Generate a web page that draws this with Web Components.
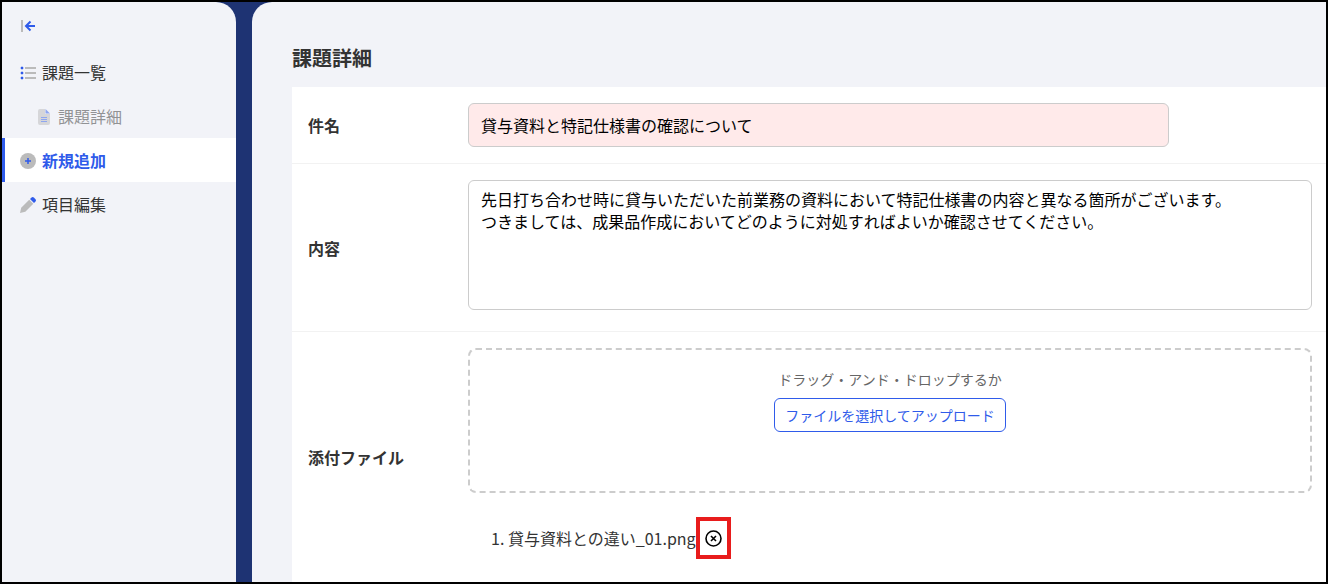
<!DOCTYPE html>
<html lang="ja">
<head>
<meta charset="utf-8">
<title>課題詳細</title>
<style>
  * { box-sizing: border-box; }
  body {
    margin: 0;
    min-height: 100vh;
    display: flex;
    border: 2px solid #000;
    color: #333;
    font: 16px/24px "Noto Sans CJK JP", sans-serif;
  }
  issue-app { flex: 1; }
</style>
</head>
<body>
<issue-app></issue-app>
<script>
const define = (name, html) => {
  const template = document.createElement('template');
  template.innerHTML = '<style>*{box-sizing:border-box}</style>' + html;
  customElements.define(name, class extends HTMLElement {
    constructor() {
      super();
      this.attachShadow({ mode: 'open' }).append(template.content.cloneNode(true));
    }
  });
};

define('nav-item', `
  <style>
    :host { display: block; }
    a {
      display: flex; align-items: center; gap: 6px;
      height: 44px; padding-left: 18px;
      color: inherit; text-decoration: none;
    }
    :host([sub]) a { padding-left: 34px; opacity: .5; }
    :host([current]) a {
      padding-left: 15px; border-left: 3px solid #2f5bea;
      background: #fff; color: #2f5bea; font-weight: 700;
    }
    ::slotted(svg) { width: 16px; height: 16px; margin-top: 2px; flex: none; }
  </style>
  <a href="#"><slot name="icon"></slot><slot></slot></a>
`);

define('side-nav', `
  <style>
    :host { display: block; background: #f2f3f8; border-radius: 0 20px 0 0; overflow: hidden; }
    .collapse {
      display: flex; align-items: center; height: 48px; padding: 0 18px;
      border: 0; background: none;
    }
  </style>
  <button class="collapse" aria-label="メニューを閉じる">
    <svg width="16" height="16" viewBox="0 0 16 16" fill="none">
      <path d="M2 2v12" stroke="#bbb" stroke-width="2"/>
      <path d="M15 8H6.500M10.500 3.500L6 8l4.500 4.500" stroke="#2f5bea" stroke-width="2"/>
    </svg>
  </button>
  <nav>
    <nav-item>
      <svg slot="icon" viewBox="0 0 16 16">
        <path d="M5 3h11M5 8h11M5 13h11" stroke="#bbb" stroke-width="2"/>
        <path d="M1 2h2v2H1zM1 7h2v2H1zM1 12h2v2H1z" fill="#2f5bea" stroke="#2f5bea" stroke-width=".5"/>
      </svg>課題一覧</nav-item>
    <nav-item sub>
      <svg slot="icon" viewBox="0 0 16 16">
        <path d="M4 0h5v5h5v9a2 2 0 0 1-2 2H4a2 2 0 0 1-2-2V2a2 2 0 0 1 2-2z" fill="#bbb"/>
        <path d="M9.500 0L14 4.500H9.500z" fill="#2f5bea"/>
        <path d="M5 8.500h6M5 10.500h6M5 12.500h6" stroke="#2f5bea"/>
      </svg>課題詳細</nav-item>
    <nav-item current>
      <svg slot="icon" viewBox="0 0 16 16">
        <circle cx="8" cy="8" r="8" fill="#bbb"/>
        <path d="M8 5v6M5 8h6" stroke="#2f5bea" stroke-width="1.500"/>
      </svg>新規追加</nav-item>
    <nav-item>
      <svg slot="icon" viewBox="0 0 16 16">
        <path d="M9.200 2.700l4.100 4.100-8 8L0 16l1.200-5.300z" fill="#bbb"/>
        <path d="M10 2l1.300-1.300a2 2 0 0 1 2.800 0l1.200 1.200a2 2 0 0 1 0 2.800L14 6z" fill="#2f5bea"/>
      </svg>項目編集</nav-item>
  </nav>
`);

define('form-row', `
  <style>
    :host {
      display: grid; grid-template-columns: 160px 1fr; align-items: center;
      padding: 16px 14px 16px 16px;
      border-bottom: 1px solid #f2f2f2;
    }
    :host(:last-of-type) { border-bottom: 0; }
    ::slotted([slot=label]) { font-weight: 700; }
  </style>
  <slot name="label"></slot>
  <div><slot></slot></div>
`);

define('drop-zone', `
  <style>
    :host {
      display: flex; flex-direction: column; align-items: center; gap: 8px;
      min-height: 145px; padding: 18px;
      border: 2px dashed #ccc; border-radius: 8px;
      color: #666; font-size: 14px; line-height: 22px;
    }
    button {
      padding: 5px 10px; border: 1px solid #2f5bea; border-radius: 6px;
      background: #fff; color: #2f5bea; font: inherit;
    }
  </style>
  <span>ドラッグ・アンド・ドロップするか</span>
  <button>ファイルを選択してアップロード</button>
`);

define('attached-file', `
  <style>
    :host { display: flex; align-items: center; padding-left: 23px; }
    button {
      display: grid; place-items: center; width: 35px; height: 42px; padding: 0;
      border: 4px solid #e81c1c; background: #fff; color: #000;
    }
  </style>
  <span><slot></slot></span>
  <button aria-label="添付ファイルを削除">
    <svg width="17" height="17" viewBox="0 0 17 17" fill="none" stroke="currentColor">
      <circle cx="8.500" cy="8.500" r="7.500" stroke-width="1.600"/>
      <path d="M6 6l5 5M11 6l-5 5" stroke-width="1.600"/>
    </svg>
  </button>
`);

define('issue-form', `
  <style>
    :host { display: flex; flex-direction: column; background: #fff; }
    form-row:last-of-type { flex: 1; }
    input, textarea {
      display: block; border: 1px solid #ccc; border-radius: 6px;
      color: #000; font: inherit; outline: 0;
    }
    input { width: 83%; height: 44px; padding: 0 12px; background: #ffeaea; }
    textarea {
      width: 100%; height: 130px; margin-bottom: 5px; padding: 7px 12px;
      background: #fff; line-height: 22px; resize: none;
    }
    attached-file { margin-top: 24px; margin-bottom: 7px; }
  </style>
  <form-row>
    <label slot="label" for="subject">件名</label>
    <input id="subject" type="text" value="貸与資料と特記仕様書の確認について">
  </form-row>
  <form-row>
    <label slot="label" for="body">内容</label>
    <textarea id="body">先日打ち合わせ時に貸与いただいた前業務の資料において特記仕様書の内容と異なる箇所がございます。
つきましては、成果品作成においてどのように対処すればよいか確認させてください。</textarea>
  </form-row>
  <form-row>
    <span slot="label">添付ファイル</span>
    <drop-zone></drop-zone>
    <attached-file>1. 貸与資料との違い_01.png</attached-file>
  </form-row>
`);

define('issue-app', `
  <style>
    :host {
      display: grid; grid-template-columns: 234px 1fr; gap: 16px;
      background: #1e3373;
    }
    main {
      display: flex; flex-direction: column;
      padding: 40px 0 0 40px;
      background: #f2f3f8; border-radius: 20px 0 0 0;
    }
    h1 { margin: 0 0 13px; font-size: 20px; line-height: 32px; }
    issue-form { flex: 1; }
  </style>
  <side-nav></side-nav>
  <main>
    <h1>課題詳細</h1>
    <issue-form></issue-form>
  </main>
`);
</script>
</body>
</html>
